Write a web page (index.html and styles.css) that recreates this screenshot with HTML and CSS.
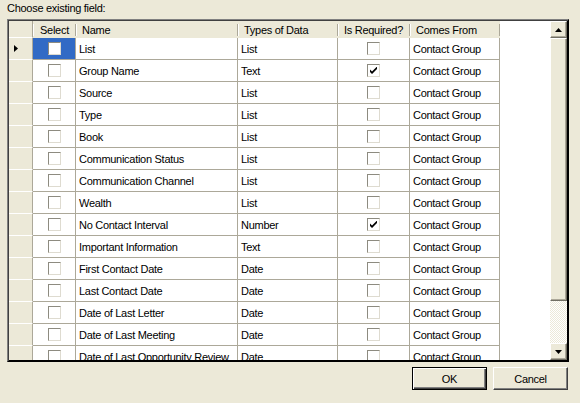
FILE: index.html
```html
<!DOCTYPE html>
<html>
<head>
<meta charset="utf-8">
<link rel="stylesheet" href="styles.css">
</head>
<body>
<div class="dialog">
  <div class="label">Choose existing field:</div>
  <div class="gridbox">
    <div class="gridarea">
      <div class="row head">
        <div class="c rh"></div>
        <div class="c hc center">Select</div>
        <div class="c hc">Name</div>
        <div class="c hc">Types of Data</div>
        <div class="c hc">Is Required?</div>
        <div class="c hc">Comes From</div>
      </div>
      <div class="row">
        <div class="c rh"><svg class="cur" width="4" height="7" viewBox="0 0 4 7"><polygon points="0,0 4,3.5 0,7" fill="#000"/></svg></div>
        <div class="c chk sel"><span class="box"></span></div>
        <div class="c">List</div><div class="c">List</div>
        <div class="c chk"><span class="box"></span></div>
        <div class="c">Contact Group</div>
      </div>
      <div class="row">
        <div class="c rh"></div>
        <div class="c chk"><span class="box"></span></div>
        <div class="c">Group Name</div><div class="c">Text</div>
        <div class="c chk"><span class="box on"><svg width="7" height="7" viewBox="0 0 7 7"><path d="M0 2.5 L2 4.5 L6.5 0 L7 0 L7 2 L2 7 L0 5 Z" fill="#000"/></svg></span></div>
        <div class="c">Contact Group</div>
      </div>
      <div class="row">
        <div class="c rh"></div>
        <div class="c chk"><span class="box"></span></div>
        <div class="c">Source</div><div class="c">List</div>
        <div class="c chk"><span class="box"></span></div>
        <div class="c">Contact Group</div>
      </div>
      <div class="row">
        <div class="c rh"></div>
        <div class="c chk"><span class="box"></span></div>
        <div class="c">Type</div><div class="c">List</div>
        <div class="c chk"><span class="box"></span></div>
        <div class="c">Contact Group</div>
      </div>
      <div class="row">
        <div class="c rh"></div>
        <div class="c chk"><span class="box"></span></div>
        <div class="c">Book</div><div class="c">List</div>
        <div class="c chk"><span class="box"></span></div>
        <div class="c">Contact Group</div>
      </div>
      <div class="row">
        <div class="c rh"></div>
        <div class="c chk"><span class="box"></span></div>
        <div class="c">Communication Status</div><div class="c">List</div>
        <div class="c chk"><span class="box"></span></div>
        <div class="c">Contact Group</div>
      </div>
      <div class="row">
        <div class="c rh"></div>
        <div class="c chk"><span class="box"></span></div>
        <div class="c">Communication Channel</div><div class="c">List</div>
        <div class="c chk"><span class="box"></span></div>
        <div class="c">Contact Group</div>
      </div>
      <div class="row">
        <div class="c rh"></div>
        <div class="c chk"><span class="box"></span></div>
        <div class="c">Wealth</div><div class="c">List</div>
        <div class="c chk"><span class="box"></span></div>
        <div class="c">Contact Group</div>
      </div>
      <div class="row">
        <div class="c rh"></div>
        <div class="c chk"><span class="box"></span></div>
        <div class="c">No Contact Interval</div><div class="c">Number</div>
        <div class="c chk"><span class="box on"><svg width="7" height="7" viewBox="0 0 7 7"><path d="M0 2.5 L2 4.5 L6.5 0 L7 0 L7 2 L2 7 L0 5 Z" fill="#000"/></svg></span></div>
        <div class="c">Contact Group</div>
      </div>
      <div class="row">
        <div class="c rh"></div>
        <div class="c chk"><span class="box"></span></div>
        <div class="c">Important Information</div><div class="c">Text</div>
        <div class="c chk"><span class="box"></span></div>
        <div class="c">Contact Group</div>
      </div>
      <div class="row">
        <div class="c rh"></div>
        <div class="c chk"><span class="box"></span></div>
        <div class="c">First Contact Date</div><div class="c">Date</div>
        <div class="c chk"><span class="box"></span></div>
        <div class="c">Contact Group</div>
      </div>
      <div class="row">
        <div class="c rh"></div>
        <div class="c chk"><span class="box"></span></div>
        <div class="c">Last Contact Date</div><div class="c">Date</div>
        <div class="c chk"><span class="box"></span></div>
        <div class="c">Contact Group</div>
      </div>
      <div class="row">
        <div class="c rh"></div>
        <div class="c chk"><span class="box"></span></div>
        <div class="c">Date of Last Letter</div><div class="c">Date</div>
        <div class="c chk"><span class="box"></span></div>
        <div class="c">Contact Group</div>
      </div>
      <div class="row">
        <div class="c rh"></div>
        <div class="c chk"><span class="box"></span></div>
        <div class="c">Date of Last Meeting</div><div class="c">Date</div>
        <div class="c chk"><span class="box"></span></div>
        <div class="c">Contact Group</div>
      </div>
      <div class="row">
        <div class="c rh"></div>
        <div class="c chk"><span class="box"></span></div>
        <div class="c">Date of Last Opportunity Review</div><div class="c">Date</div>
        <div class="c chk"><span class="box"></span></div>
        <div class="c">Contact Group</div>
      </div>
    </div>
    <div class="vscroll">
      <div class="sbtn"><svg width="7" height="4" viewBox="0 0 7 4"><polygon points="3.5,0 7,4 0,4" fill="#000"/></svg></div>
      <div class="thumb"></div>
      <div class="track"></div>
      <div class="sbtn"><svg width="7" height="4" viewBox="0 0 7 4"><polygon points="0,0 7,0 3.5,4" fill="#000"/></svg></div>
    </div>
  </div>
  <div class="buttons">
    <button class="btn default">OK</button>
    <button class="btn">Cancel</button>
  </div>
</div>
</body>
</html>
```
FILE: styles.css
```css
html, body {
  margin: 0;
  padding: 0;
  background: #ece9d8;
}
body {
  font-family: "Liberation Sans", Arial, sans-serif;
  font-size: 11px;
  letter-spacing: -0.28px;
  color: #000;
}
.dialog {
  width: 580px;
  height: 403px;
  padding-left: 7px;
  box-sizing: border-box;
}
.label {
  height: 19px;
  padding-top: 2px;
  line-height: 13px;
  box-sizing: border-box;
}
.gridbox {
  width: 562px;
  height: 343px;
  box-sizing: border-box;
  border: 1px solid;
  border-color: #808080 #000 #000 #808080;
  padding: 1px;
  box-shadow: inset 1px 1px 0 #404040, inset -1px -1px 0 #000;
  display: flex;
}
.gridarea {
  flex: 1;
  background: #fff;
  overflow: hidden;
}
.row {
  display: grid;
  grid-template-columns: 24px 43px 162px 100px 72px 90px;
  height: 22px;
}
.row.head {
  height: 17px;
}
.c {
  box-sizing: border-box;
  border-right: 1px solid #aca899;
  border-bottom: 1px solid #aca899;
  display: flex;
  align-items: center;
  padding-left: 3px;
  white-space: nowrap;
  overflow: hidden;
}
.head .c {
  border: 0;
  background: #ece9d8;
}
.head .hc {
  padding-left: 6px;
  background:
    linear-gradient(#aca899, #aca899) right center / 1px 12px no-repeat,
    linear-gradient(#fff, #fff) left center / 1px 12px no-repeat,
    #ece9d8;
}
.head .hc.center {
  justify-content: center;
  padding-left: 0;
}
.head .c.rh {
  border-right: 1px solid #aca899;
}
.c.rh {
  background: #ece9d8;
  border-bottom: 1px solid #fff;
  padding-left: 5px;
}
.cur {
  display: block;
}
.c.chk {
  justify-content: center;
  padding-left: 0;
}
.c.sel {
  background: #316ac5;
}
.box {
  width: 13px;
  height: 13px;
  box-sizing: border-box;
  border: 1px solid;
  border-color: #8d8b80 #dedbd0 #dedbd0 #8d8b80;
  background: #fff;
  display: flex;
  align-items: center;
  justify-content: center;
}
.box svg {
  display: block;
}
.vscroll {
  width: 17px;
  display: flex;
  flex-direction: column;
  background: #fff;
}
.sbtn, .thumb {
  box-sizing: border-box;
  background: #ece9d8;
  border: 1px solid;
  border-color: #fff #716f64 #716f64 #fff;
  box-shadow: inset -1px -1px 0 #aca899;
}
.sbtn {
  height: 17px;
  display: flex;
  align-items: center;
  justify-content: center;
}
.sbtn svg {
  display: block;
}
.thumb {
  height: 263px;
}
.track {
  flex: 1;
  background: repeating-conic-gradient(#ece9d8 0 25%, #fff 0 50%) 0 0 / 2px 2px;
}
.buttons {
  display: flex;
  justify-content: flex-end;
  gap: 6px;
  width: 561px;
  margin-top: 5px;
}
.btn {
  width: 75px;
  height: 23px;
  box-sizing: border-box;
  font-family: "Liberation Sans", Arial, sans-serif;
  font-size: 11px;
  letter-spacing: -0.28px;
  color: #000;
  background: #ece9d8;
  border: 1px solid;
  border-color: #fff #404040 #404040 #fff;
  box-shadow: inset -1px -1px 0 #808080;
  padding: 0;
  margin: 0;
}
.btn.default {
  border-color: #000;
  box-shadow: inset 1px 1px 0 #fff, inset -1px -1px 0 #404040, inset -2px -2px 0 #808080;
}
```
